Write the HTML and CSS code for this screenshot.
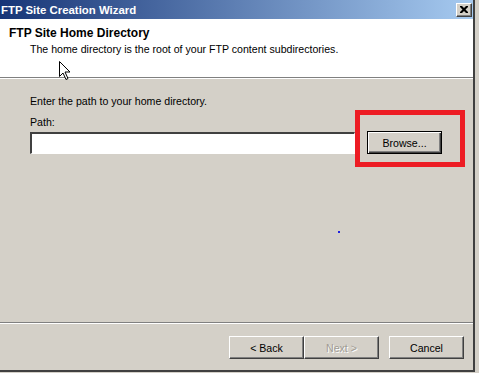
FILE: index.html
```html
<!DOCTYPE html>
<html lang="en">
<head>
    <meta charset="UTF-8">
    <title>FTP Site Creation Wizard</title>
    <link rel="stylesheet" href="styles.css">
</head>
<body>
    <div class="window">
        <div class="titlebar">
            <span class="title">FTP Site Creation Wizard</span>
            <span class="close-btn">
                <svg width="8" height="7" viewBox="0 0 8 7"><path d="M0 0h2l2 2 2-2h2v1l-2.5 2.5L8 6v1H6L4 5 2 7H0V6l2.5-2.5L0 1z" fill="#000"/></svg>
            </span>
        </div>

        <div class="header">
            <div class="header-title">FTP Site Home Directory</div>
            <div class="header-sub">The home directory is the root of your FTP content subdirectories.</div>
        </div>

        <div class="content">
            <p class="intro">Enter the path to your home directory.</p>
            <label class="path-label" for="path">Path:</label>
            <div class="path-row">
                <input type="text" id="path" class="path-input">
                <div class="highlight">
                    <button class="btn btn-default">Browse...</button>
                </div>
            </div>
            <span class="dot"></span>
        </div>

        <div class="footer">
            <button class="btn">&lt; Back</button>
            <button class="btn" disabled>Next &gt;</button>
            <button class="btn btn-cancel">Cancel</button>
        </div>
    </div>

    <!-- mouse pointer sitting over the header -->
    <svg class="cursor" width="12" height="19" viewBox="0 0 12 19">
        <path d="M0.5 0.5v15l3.5-3.5 3 6.5 2-1-3-6.5h5z" fill="#fff" stroke="#000" stroke-width="1"/>
    </svg>
</body>
</html>
```

FILE: styles.css
```css
/* whole page */
body {
    margin: 0;
    background: #d4d0c8;
    font-family: 'Liberation Sans', Arial, sans-serif;
    font-size: 10.6px;
    line-height: 13px;
    color: #000;
    height: 373px;
    overflow: hidden;
    position: relative;
}

.window {
    width: 473px;
    height: 370px;
    border-right: 2px solid #404040;
    border-bottom: 2px solid #404040;
    display: flex;
    flex-direction: column;
    background: #d4d0c8;
}

/* title bar */
.titlebar {
    height: 19px;
    flex: none;
    background: linear-gradient(90deg, #173577, #a6caf0);
    display: flex;
    align-items: center;
    justify-content: space-between;
    padding: 0 1px;
}

.title {
    color: #fff;
    font-weight: bold;
    font-size: 11.4px;
    padding-top: 1px;
}

.close-btn {
    width: 14px;
    height: 12px;
    background: #d4d0c8;
    border-top: 1px solid #fff;
    border-left: 1px solid #fff;
    border-right: 1px solid #404040;
    border-bottom: 1px solid #404040;
    box-shadow: inset -1px -1px 0 #808080;
    display: flex;
    align-items: center;
    justify-content: center;
}

/* white header band */
.header {
    height: 58px;
    flex: none;
    background: #fff;
    border-bottom: 1px solid #808080;
    box-shadow: 0 1px 0 #fff;
    padding: 0 0 0 9px;
    position: relative;
}

.header-title {
    font-weight: bold;
    font-size: 12px;
    margin-top: 8px;
}

.header-sub {
    margin: 3px 0 0 21px;
}

/* body of the wizard page */
.content {
    flex: 1;
    padding: 17px 0 0 30px;
    position: relative;
}

.intro {
    margin: 0 0 8px 0;
}

.path-label {
    display: block;
    margin-bottom: 3px;
}

.path-row {
    display: flex;
    align-items: flex-start;
    margin-top: -22px;
}

.path-input {
    box-sizing: border-box;
    width: 325px;
    height: 22px;
    margin: 22px 0 0 0;
    padding: 0;
    border-top: 2px solid #404040;
    border-left: 2px solid #404040;
    border-right: 1px solid #fff;
    border-bottom: 1px solid #fff;
    background: #fff;
}

.highlight {
    box-sizing: border-box;
    width: 110px;
    height: 57px;
    border: 5px solid #ed1c24;
    display: flex;
    align-items: flex-start;
}

.dot {
    position: absolute;
    left: 338px;
    top: 153px;
    width: 2px;
    height: 2px;
    background: #2020e0;
}

/* buttons */
.btn {
    box-sizing: border-box;
    font-family: inherit;
    font-size: 10.6px;
    width: 75px;
    height: 23px;
    background: #d4d0c8;
    border-top: 1px solid #fff;
    border-left: 1px solid #fff;
    border-right: 1px solid #404040;
    border-bottom: 1px solid #404040;
    box-shadow: inset -1px -1px 0 #808080;
    color: #000;
    padding: 0;
}

.btn:disabled {
    color: #a09c94;
    text-shadow: 1px 1px 0 #fff;
}

.btn-default {
    margin: 16px 0 0 7px;
    border: 1px solid #000;
    box-shadow: inset 1px 1px 0 #fff, inset -1px -1px 0 #404040, inset -2px -2px 0 #808080;
}

.footer {
    height: 48px;
    flex: none;
    box-sizing: border-box;
    border-top: 1px solid #808080;
    box-shadow: inset 0 1px 0 #fff;
    display: flex;
    justify-content: flex-end;
    align-items: flex-start;
    padding: 13px 9px 0 0;
}

.btn-cancel {
    margin-left: 10px;
}

.cursor {
    position: absolute;
    left: 59px;
    top: 61px;
}
```
